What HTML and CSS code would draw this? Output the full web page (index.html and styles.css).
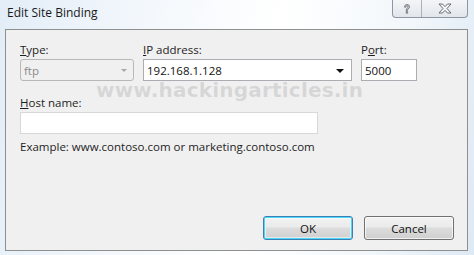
FILE: index.html
```html
<!DOCTYPE html>
<html>
<head>
<meta charset="utf-8">
<link rel="stylesheet" href="styles.css">
</head>
<body>
<div class="window">
  <div class="titlebar">
    <span class="title">Edit Site Binding</span>
    <div class="caption-btns">
      <div class="cbtn help">
        <svg width="12" height="12" viewBox="0 0 12 12"><path d="M3.5 4.2 Q3.5 1.5 6 1.5 Q8.5 1.5 8.5 3.8 Q8.5 5.2 7 6 Q6.5 6.3 6.5 7.5 L5.2 7.5 Q5.2 5.8 6.2 5.2 Q7.2 4.6 7.2 3.8 Q7.2 2.7 6 2.7 Q4.8 2.7 4.8 4.2 Z M5.2 8.6 H6.6 V10.2 H5.2 Z" fill="#f4f6f8" stroke="#5a6068" stroke-width="0.8"/></svg>
      </div>
      <div class="cbtn close">
        <svg width="16" height="11" viewBox="0 0 16 11"><path d="M2 1 H5.5 L8 3.6 L10.5 1 H14 L10 5.5 L14 10 H10.5 L8 7.4 L5.5 10 H2 L6 5.5 Z" fill="#f4f6f8" stroke="#5a6068" stroke-width="0.9" stroke-linejoin="round"/></svg>
      </div>
    </div>
  </div>
  <div class="panel">
    <div class="fields">
      <div class="field f-type">
        <label class="lbl"><u>T</u>ype:</label>
        <div class="combo disabled"><span>ftp</span><span class="arrow grey"></span></div>
      </div>
      <div class="field f-ip">
        <label class="lbl"><u>I</u>P address:</label>
        <div class="combo"><span>192.168.1.128</span><span class="arrow"></span></div>
      </div>
      <div class="field f-port">
        <label class="lbl">P<u>o</u>rt:</label>
        <div class="textbox"><span>5000</span></div>
      </div>
    </div>
    <div class="field f-host">
      <label class="lbl"><u>H</u>ost name:</label>
      <div class="textbox wide"></div>
    </div>
    <p class="example">Example: www.contoso.com or marketing.contoso.com</p>
    <div class="buttons">
      <div class="btn default">OK</div>
      <div class="btn">Cancel</div>
    </div>
    <div class="watermark">www.hackingarticles.in</div>
  </div>
</div>
</body>
</html>
```
FILE: styles.css
```css
* { box-sizing: border-box; }
html, body { margin: 0; padding: 0; }
body {
  width: 474px;
  height: 255px;
  overflow: hidden;
  font-family: "Open Sans", "Noto Sans", sans-serif;
  font-size: 11.5px;
  color: #1e1e1e;
}
.window {
  width: 474px;
  height: 255px;
  background: linear-gradient(100deg, #e3edf7 0%, #f4f8fc 30%, #ffffff 55%, #f2f7fb 80%, #dde9f4 100%);
  position: relative;
}
.titlebar {
  height: 29px;
  display: flex;
  align-items: flex-start;
  justify-content: space-between;
  padding-left: 7px;
  padding-right: 6px;
}
.title {
  font-size: 12px;
  margin-top: 4px;
  color: #1a1a1a;
}
.caption-btns {
  display: flex;
  height: 18px;
  border: 1px solid #8d96a2;
  border-top: none;
  border-radius: 0 0 4px 4px;
  background: linear-gradient(#f3f5f8, #e2e6eb);
  overflow: hidden;
}
.cbtn {
  display: flex;
  align-items: center;
  justify-content: center;
  height: 17px;
}
.help { width: 29px; border-right: 1px solid #a9b1bb; }
.close { width: 45px; }
.panel {
  position: relative;
  margin-left: 5px;
  width: 463px;
  height: 222px;
  border: 1px solid #8e8f8f;
  background: #f0f0f0;
  padding: 12px 0 0 14px;
}
.fields {
  display: flex;
}
.field {
  display: flex;
  flex-direction: column;
}
.f-type { width: 114px; margin-right: 9px; }
.f-ip { width: 209px; margin-right: 9px; }
.f-port { width: 56px; }
.lbl {
  height: 15px;
  line-height: 15px;
  margin-bottom: 2px;
  color: #1e1e1e;
}
.lbl u { text-decoration: underline; text-decoration-thickness: 1px; text-underline-offset: 1px; text-decoration-skip-ink: none; }
.combo, .textbox {
  height: 22px;
  border: 1px solid #abadb3;
  background: #fff;
  display: flex;
  align-items: center;
  justify-content: space-between;
  padding: 0 7px 0 3px;
  color: #111;
}
.combo.disabled {
  background: #f0f0f0;
  border-color: #b8b8b8;
  border-radius: 3px;
  color: #8a8a8a;
}
.arrow {
  width: 0;
  height: 0;
  border-left: 4px solid transparent;
  border-right: 4px solid transparent;
  border-top: 4px solid #111;
  margin-top: 1px;
}
.arrow.grey { border-top-color: #a8a8a8; border-left-width: 3.5px; border-right-width: 3.5px; border-top-width: 3px; margin-right: -1px; }
.f-host { margin-top: 14px; }
.textbox.wide { width: 298px; border-color: #d8d8d8; }
.example {
  margin: 5px 0 0 0;
  line-height: 15px;
  color: #1e1e1e;
}
.buttons {
  display: flex;
  gap: 11px;
  margin-top: 62px;
  margin-left: 243px;
}
.btn {
  width: 90px;
  height: 24px;
  border: 1px solid #707070;
  border-radius: 3px;
  background: linear-gradient(#f2f2f2 0%, #ebebeb 45%, #dddddd 50%, #cfcfcf 100%);
  display: flex;
  align-items: center;
  justify-content: center;
  color: #111;
  box-shadow: inset 0 0 0 1px rgba(255,255,255,0.7);
}
.btn.default {
  border-color: #3c7fb1;
  box-shadow: inset 0 0 0 1px #48d8fb, inset 0 0 0 2px rgba(255,255,255,0.5);
}
.watermark {
  position: absolute;
  left: 90px;
  top: 48px;
  font-family: "DejaVu Sans", sans-serif;
  font-weight: bold;
  font-size: 20px;
  letter-spacing: 0.2px;
  color: rgba(150, 150, 150, 0.28);
  pointer-events: none;
}
```
